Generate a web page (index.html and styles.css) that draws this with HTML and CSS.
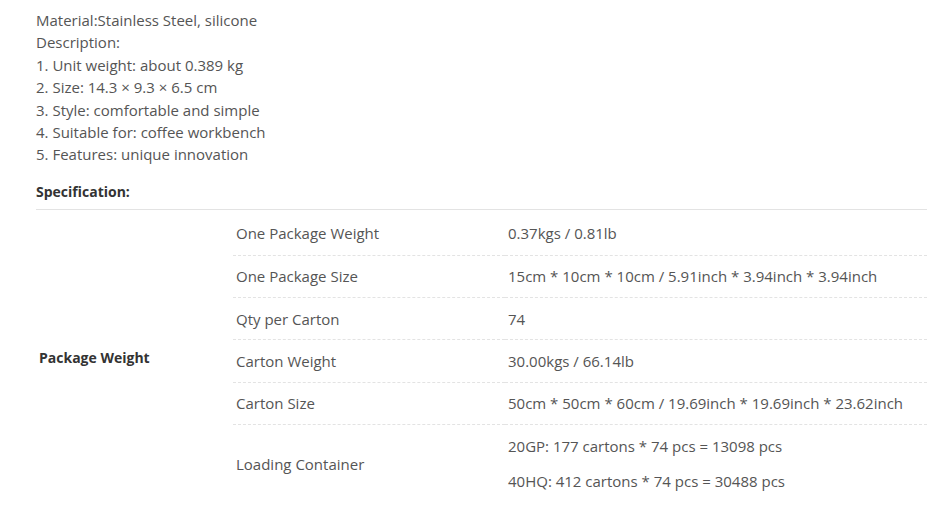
FILE: index.html
```html
<!DOCTYPE html>
<html lang="en">
<head>
    <meta charset="UTF-8" />
    <meta name="viewport" content="width=device-width, initial-scale=1.0" />
    <title>Product Description</title>
    <link rel="stylesheet" href="styles.css">
</head>
<body>
    <div class="desc">
        <p>Material:Stainless Steel, silicone</p>
        <p>Description:</p>
        <p>1. Unit weight: about 0.389 kg</p>
        <p>2. Size: 14.3 × 9.3 × 6.5 cm</p>
        <p>3. Style: comfortable and simple</p>
        <p>4. Suitable for: coffee workbench</p>
        <p>5. Features: unique innovation</p>
    </div>

    <h3 class="spec-title">Specification:</h3>

    <table class="spec">
        <tr class="first">
            <th rowspan="6">Package Weight</th>
            <td class="name">One Package Weight</td>
            <td>0.37kgs / 0.81lb</td>
        </tr>
        <tr>
            <td class="name">One Package Size</td>
            <td>15cm * 10cm * 10cm / 5.91inch * 3.94inch * 3.94inch</td>
        </tr>
        <tr>
            <td class="name">Qty per Carton</td>
            <td>74</td>
        </tr>
        <tr>
            <td class="name">Carton Weight</td>
            <td>30.00kgs / 66.14lb</td>
        </tr>
        <tr>
            <td class="name">Carton Size</td>
            <td>50cm * 50cm * 60cm / 19.69inch * 19.69inch * 23.62inch</td>
        </tr>
        <tr class="last">
            <td class="name">Loading Container</td>
            <td>
                <p>20GP: 177 cartons * 74 pcs = 13098 pcs</p>
                <p>40HQ: 412 cartons * 74 pcs = 30488 pcs</p>
            </td>
        </tr>
    </table>
</body>
</html>
```

FILE: styles.css
```css
body {
    margin: 0;
    padding: 9px 0 0 36px;
    font-family: "Open Sans", "Liberation Sans", sans-serif;
    font-size: 15px;
    line-height: 22.4px;
    color: #555;
    background-color: #fff;
}

p {
    margin: 0;
}

.spec-title {
    margin: 15px 0 0;
    padding-bottom: 6px;
    font-size: 14px;
    font-weight: 700;
    color: #333;
    border-bottom: 1px solid #e3e3e3;
}

/* Tabulka specifikace */
.spec {
    width: 100%;
    border-collapse: collapse;
}

.spec th {
    width: 194px;
    padding: 4px 0 0 3px;
    text-align: left;
    font-size: 14px;
    font-weight: 700;
    color: #333;
    vertical-align: middle;
}

.spec td {
    padding: 9.5px 0 9.5px 3px;
    border-bottom: 1px dashed #e3e3e3;
    vertical-align: middle;
}

.spec td.name {
    width: 269px;
}

.spec tr.first td {
    padding-top: 11.5px;
    padding-bottom: 10.5px;
}

.spec tr.last td {
    padding-top: 10px;
    border-bottom: none;
}

.spec tr.last td p + p {
    margin-top: 12.6px;
}
```
